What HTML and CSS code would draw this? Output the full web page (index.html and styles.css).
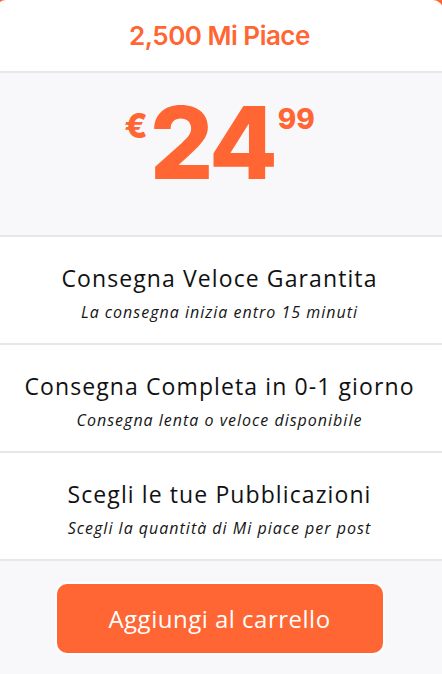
FILE: index.html
```html
<!DOCTYPE html>
<html lang="it">
<head>
    <meta charset="UTF-8">
    <meta name="viewport" content="width=device-width, initial-scale=1.0">
    <title>2,500 Mi Piace</title>
    <link rel="stylesheet" href="styles.css">
</head>
<body>
    <div class="plan">
        <div class="plan-title">2,500 Mi Piace</div>
        <div class="plan-price">
            <span class="currency">€</span>
            <span class="whole">24</span>
            <span class="cents">99</span>
        </div>
        <div class="feature">
            <div class="feature-name">Consegna Veloce Garantita</div>
            <div class="feature-note">La consegna inizia entro 15 minuti</div>
        </div>
        <div class="feature">
            <div class="feature-name">Consegna Completa in 0-1 giorno</div>
            <div class="feature-note">Consegna lenta o veloce disponibile</div>
        </div>
        <div class="feature">
            <div class="feature-name">Scegli le tue Pubblicazioni</div>
            <div class="feature-note">Scegli la quantità di Mi piace per post</div>
        </div>
        <div class="plan-footer">
            <button class="add-btn">Aggiungi al carrello</button>
        </div>
    </div>
</body>
</html>
```

FILE: styles.css
```css
body {
    margin: 0;
    background: #ff6633;
    font-family: "Open Sans", sans-serif;
    color: #151515;
    overflow: hidden;
}
.plan {
    background-color: #fff;
    border-radius: 10px 10px 0 0;
    margin-left: -4px;
    width: calc(100% + 5px);
    height: 674px;
    display: flex;
    flex-direction: column;
}
.plan-title {
    height: 71px;
    display: flex;
    align-items: center;
    justify-content: center;
    color: #ff6633;
    font-family: "Inter", sans-serif;
    font-weight: 600;
    font-size: 26px;
    letter-spacing: -0.5px;
    border-bottom: 2px solid #e7e7e9;
}
.plan-price {
    height: 164px;
    box-sizing: border-box;
    background-color: #f8f8fa;
    border-bottom: 2px solid #e7e7e9;
    display: flex;
    justify-content: center;
    align-items: flex-start;
    padding-top: 20px;
    color: #ff6633;
    font-family: "Inter", sans-serif;
    font-weight: 800;
    line-height: 1;
}
.currency {
    font-size: 34px;
    margin-top: 16px;
    margin-right: 2px;
}
.whole {
    font-size: 100px;
    letter-spacing: -3px;
}
.cents {
    font-size: 28px;
    margin-top: 12px;
    margin-left: 3px;
}
.feature {
    height: 108px;
    box-sizing: border-box;
    padding-top: 4px;
    border-bottom: 2px solid #e7e7e9;
    display: flex;
    flex-direction: column;
    align-items: center;
    justify-content: center;
    gap: 7px;
}
.feature-name {
    font-size: 23px;
    letter-spacing: 1.1px;
    color: #111;
}
.feature-note {
    font-size: 16px;
    font-style: italic;
    letter-spacing: 1px;
}
.plan-footer {
    flex: 1;
    background-color: #f8f8fa;
    display: flex;
    justify-content: center;
    align-items: flex-start;
    padding-top: 21px;
}
.add-btn {
    width: 330px;
    height: 73px;
    background-color: #ff6633;
    color: #fff;
    border: 2px solid #fff;
    border-radius: 12px;
    font-family: "Open Sans", sans-serif;
    font-size: 24px;
    letter-spacing: 0.5px;
    cursor: pointer;
}
```
